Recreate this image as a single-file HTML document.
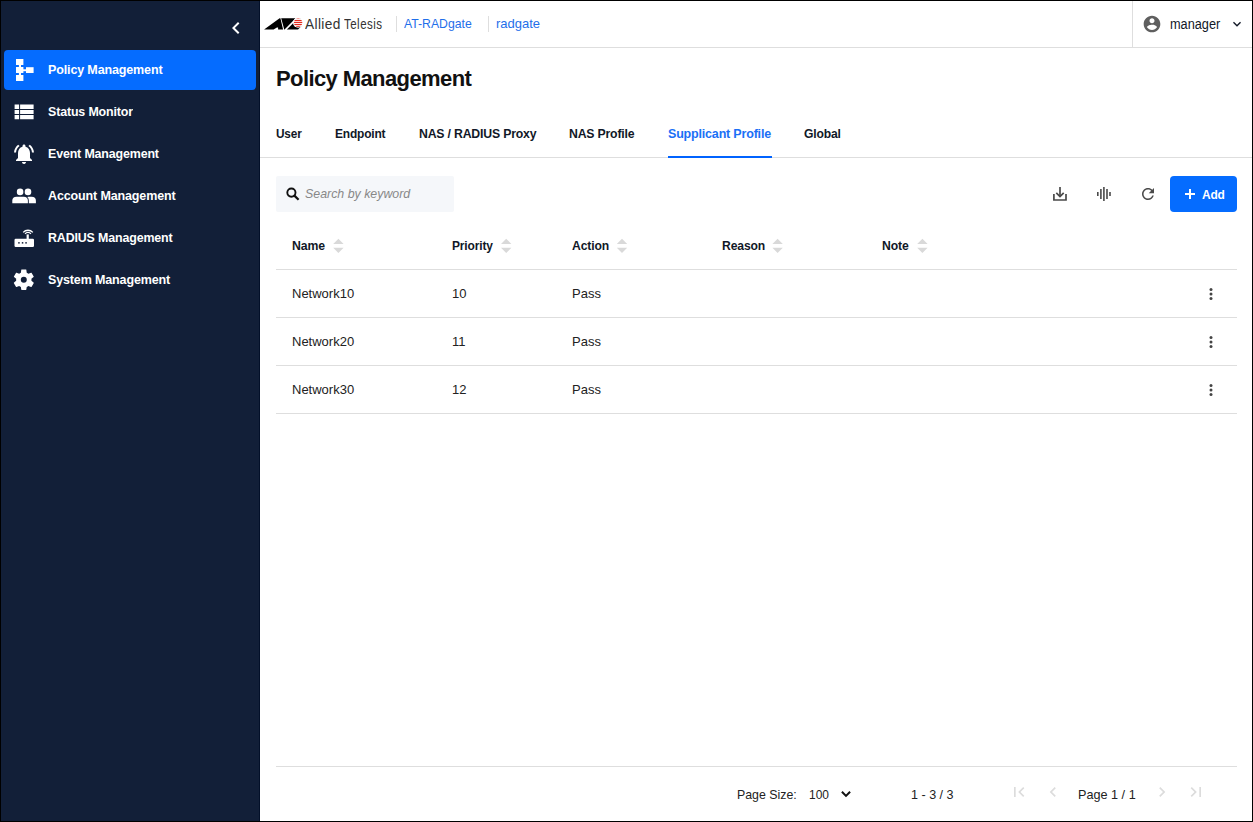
<!DOCTYPE html>
<html>
<head>
<meta charset="utf-8">
<style>
*{box-sizing:border-box;margin:0;padding:0}
html,body{width:1253px;height:822px;overflow:hidden;background:#000}
body{position:relative;font-family:"Liberation Sans",sans-serif}
.a{position:absolute;white-space:nowrap}
svg.a{overflow:visible}
#side{position:absolute;left:1px;top:1px;width:258px;height:820px;background:#121f38}
#sidel{position:absolute;left:259px;top:1px;width:1px;height:820px;background:#031029}
#main{position:absolute;left:260px;top:1px;width:992px;height:820px;background:#fff}
.nav{position:absolute;left:4px;width:252px;height:40px;border-radius:4px}
.nav.active{background:#056cff}
.nt{position:absolute;left:48px;transform:scaleX(.955);transform-origin:0 0;font-size:13px;font-weight:bold;color:#fff;letter-spacing:-0.15px;line-height:16px;white-space:nowrap}
.hl{position:absolute;background:#dedede}
.tab{position:absolute;top:126px;font-size:13px;font-weight:bold;color:#111827;letter-spacing:-0.2px;line-height:16px;white-space:nowrap}
.th{position:absolute;top:238px;font-size:13px;font-weight:bold;color:#111827;letter-spacing:-0.15px;line-height:16px;white-space:nowrap}
.td{position:absolute;font-size:13px;color:#222;line-height:16px;white-space:nowrap}
.pg{position:absolute;top:787px;font-size:13px;color:#222;line-height:16px;white-space:nowrap}
</style>
</head>
<body>
<div id="side"></div>
<div id="sidel"></div>
<div id="main"></div>

<!-- sidebar collapse chevron -->
<svg class="a" style="left:224px;top:16px" width="24" height="24" viewBox="0 0 24 24"><path fill="#fff" d="M15.41 7.41L14 6l-6 6 6 6 1.41-1.41L10.83 12z"/></svg>

<!-- nav items -->
<div class="nav active" style="top:50px"></div>
<svg class="a" style="left:12px;top:58px" width="24" height="24" viewBox="0 0 24 24" fill="#fff">
  <rect x="4" y="1" width="7.4" height="6"/>
  <rect x="4" y="9" width="7.4" height="6"/>
  <rect x="4" y="17" width="7.4" height="6"/>
  <rect x="6.9" y="6" width="2.1" height="12"/>
  <rect x="11" y="11.3" width="3" height="1.9"/>
  <rect x="14" y="9.2" width="7.6" height="5.8"/>
</svg>
<div class="nt" style="top:62px;transform:scaleX(.963)">Policy Management</div>

<svg class="a" style="left:12px;top:100px" width="24" height="24" viewBox="0 0 24 24" fill="#fff"><path d="M2.6 4.6H7.1V9.1H2.6ZM2.6 9.9H7.1V14.1H2.6ZM2.6 15H7.1V19.2H2.6ZM8.1 4.6H21.6V9.1H8.1ZM8.1 9.9H21.6V14.1H8.1ZM8.1 15H21.6V19.2H8.1Z"/></svg>
<div class="nt" style="top:104px">Status Monitor</div>

<svg class="a" style="left:12px;top:142px" width="24" height="24" viewBox="0 0 24 24" fill="#fff"><path d="M7.58 4.08L6.15 2.65C3.75 4.48 2.17 7.3 2.03 10.5h2c.15-2.65 1.51-4.97 3.55-6.42zm12.39 6.42h2c-.15-3.2-1.73-6.02-4.12-7.85l-1.42 1.43c2.02 1.45 3.39 3.77 3.54 6.42zM18 11c0-3.07-1.64-5.64-4.5-6.32V4c0-.83-.67-1.5-1.5-1.5s-1.5.67-1.5 1.5v.68C7.63 5.36 6 7.92 6 11v5l-2 2v1h16v-1l-2-2v-5zm-6 11c.14 0 .27-.01.4-.04.65-.14 1.18-.58 1.44-1.18.1-.24.16-.5.16-.78h-4c.01 1.1.9 2 2 2z"/></svg>
<div class="nt" style="top:146px">Event Management</div>

<svg class="a" style="left:0px;top:0px" width="60" height="300" viewBox="0 0 60 300" fill="#fff">
  <circle cx="20.1" cy="191.9" r="3.3"/>
  <circle cx="28" cy="191.9" r="3.3"/>
  <path d="M12.3 203.3V200.8Q12.3 196.8 16.6 196.8H23.6Q27.9 196.8 27.9 200.8V203.3Z"/>
  <path d="M28.8 203.3V200.6Q28.8 198.3 27.3 196.9L28.6 196.8H31.6Q35.9 196.8 35.9 200.8V203.3Z"/>
</svg>
<div class="nt" style="top:188px;transform:scaleX(.963)">Account Management</div>

<svg class="a" style="left:0px;top:0px" width="60" height="300" viewBox="0 0 60 300" fill="#fff">
  <rect x="14.5" y="238.7" width="19.5" height="8.3" rx="1.2"/>
  <rect x="26.6" y="234.4" width="2.2" height="5" />
  <path d="M23.2 232.4a6.4 6.4 0 0 1 9.6 0" fill="none" stroke="#fff" stroke-width="1.3"/>
  <path d="M25.1 233.9a3.6 3.6 0 0 1 5.8 0" fill="none" stroke="#fff" stroke-width="1.3"/>
  <rect x="18.2" y="242.1" width="1.5" height="1.5" fill="#121f38"/>
  <rect x="21.8" y="242.1" width="1.5" height="1.5" fill="#121f38"/>
  <rect x="25.3" y="242.1" width="1.5" height="1.5" fill="#121f38"/>
</svg>
<div class="nt" style="top:230px">RADIUS Management</div>

<svg class="a" style="left:11.2px;top:267px" width="25.6" height="25.6" viewBox="0 0 24 24" fill="#fff"><path d="M19.14,12.94c0.04-0.3,0.06-0.61,0.06-0.94c0-0.32-0.02-0.64-0.07-0.94l2.03-1.58c0.18-0.14,0.23-0.41,0.12-0.61 l-1.92-3.32c-0.12-0.22-0.37-0.29-0.59-0.22l-2.39,0.96c-0.5-0.38-1.03-0.7-1.62-0.94L14.4,2.81c-0.04-0.24-0.24-0.41-0.48-0.41 h-3.84c-0.24,0-0.43,0.17-0.47,0.41L9.25,5.350C8.66,5.59,8.12,5.92,7.63,6.29L5.24,5.33c-0.22-0.08-0.47,0-0.59,0.22L2.74,8.87 C2.62,9.08,2.66,9.34,2.86,9.48l2.03,1.58C4.840,11.36,4.8,11.69,4.8,12s0.02,0.64,0.07,0.94l-2.03,1.58 c-0.18,0.14-0.23,0.41-0.12,0.61l1.92,3.32c0.12,0.22,0.37,0.29,0.59,0.22l2.39-0.96c0.5,0.38,1.03,0.7,1.62,0.94l0.36,2.54 c0.05,0.24,0.24,0.41,0.48,0.41h3.84c0.24,0,0.44-0.17,0.47-0.41l0.36-2.54c0.59-0.24,1.13-0.56,1.62-0.94l2.39,0.96 c0.22,0.08,0.47,0,0.59-0.22l1.92-3.32c0.12-0.22,0.07-0.47-0.12-0.61L19.14,12.94z M12,14.8a2.8,2.8 0 1 1 0-5.6a2.8,2.8 0 1 1 0 5.6z"/></svg>
<div class="nt" style="top:272px;transform:scaleX(.963)">System Management</div>

<!-- header -->
<div class="hl" style="left:260px;top:47px;width:992px;height:1px"></div>
<div class="hl" style="left:1132px;top:1px;width:1px;height:46px"></div>

<!-- logo -->
<svg class="a" style="left:0;top:0" width="400" height="50" viewBox="0 0 400 50">
  <defs><clipPath id="globe"><circle cx="298.1" cy="22.7" r="4.2"/></clipPath></defs>
  <path fill="#000" d="M264.1 29.6L279.6 18.3H280.4L283.1 29.6H278.1V27.4H276.9L273.6 29.6Z"/>
  <path fill="#000" d="M281.2 18.3H295.6L284.3 29.7Z"/>
  <path fill="#000" d="M286.9 29.6L298.1 18.3H300.5L301.5 26L298 29.6Z"/>
  <circle cx="298.1" cy="22.7" r="5.1" fill="#fff"/>
  <g clip-path="url(#globe)" fill="#e52b1e">
    <rect x="293" y="18" width="11" height="1"/>
    <rect x="293" y="19.9" width="11" height="1.2"/>
    <rect x="293" y="21.9" width="11" height="1.2"/>
    <rect x="293" y="24" width="11" height="1.2"/>
    <rect x="293" y="26.1" width="11" height="1.1"/>
  </g>
</svg>
<div class="a" style="left:305px;top:15px;font-size:15px;letter-spacing:0.4px;color:#333;line-height:18px;transform:scaleX(.915);transform-origin:0 0">Allied</div><div class="a" style="left:344px;top:15px;font-size:15px;letter-spacing:0.6px;color:#333;line-height:18px;transform:scaleX(.77);transform-origin:0 0">Telesis</div>
<div class="hl" style="left:396px;top:16px;width:1px;height:16px"></div>
<div class="a" style="left:404px;top:16px;font-size:13px;color:#1f6fea;line-height:16px;transform:scaleX(.94);transform-origin:0 0">AT-RADgate</div>
<div class="hl" style="left:488px;top:16px;width:1px;height:16px"></div>
<div class="a" style="left:496px;top:16px;font-size:13px;color:#1f6fea;line-height:16px">radgate</div>

<!-- user -->
<svg class="a" style="left:1141.5px;top:14.4px" width="20" height="20" viewBox="0 0 24 24"><path fill="#5f5f5f" d="M12 2C6.48 2 2 6.48 2 12s4.48 10 10 10 10-4.48 10-10S17.52 2 12 2zm0 3c1.66 0 3 1.34 3 3s-1.34 3-3 3-3-1.34-3-3 1.34-3 3-3zm0 14.2c-2.5 0-4.71-1.28-6-3.22.03-1.99 4-3.08 6-3.08 1.99 0 5.97 1.09 6 3.08-1.29 1.94-3.5 3.22-6 3.22z"/></svg>
<div class="a" style="left:1170px;top:16px;font-size:14px;color:#111827;line-height:16px;transform:scaleX(.91);transform-origin:0 0">manager</div>
<svg class="a" style="left:1229px;top:16px" width="16" height="16" viewBox="0 0 24 24"><path fill="#111827" d="M16.59 8.59L12 13.17 7.41 8.59 6 10l6 6 6-6z"/></svg>

<!-- title -->
<div class="a" style="left:276px;top:67px;font-size:22px;font-weight:bold;color:#111;letter-spacing:-0.6px;line-height:24px">Policy Management</div>

<!-- tabs -->
<div class="tab" style="left:276px;transform:scaleX(0.91);transform-origin:0 0">User</div>
<div class="tab" style="left:335px;transform:scaleX(0.92);transform-origin:0 0">Endpoint</div>
<div class="tab" style="left:419px;transform:scaleX(0.944);transform-origin:0 0">NAS / RADIUS Proxy</div>
<div class="tab" style="left:569px;transform:scaleX(0.943);transform-origin:0 0">NAS Profile</div>
<div class="tab" style="left:668px;color:#1a70f6;transform:scaleX(.963);transform-origin:0 0">Supplicant Profile</div>
<div class="tab" style="left:804px;transform:scaleX(0.933);transform-origin:0 0">Global</div>
<div class="hl" style="left:260px;top:157px;width:992px;height:1px"></div>
<div class="a" style="left:668px;top:156px;width:104px;height:2px;background:#0063ff"></div>

<!-- search -->
<div class="a" style="left:276px;top:176px;width:178px;height:36px;background:#f5f7fa;border-radius:2px"></div>
<svg class="a" style="left:0;top:0" width="400" height="220" viewBox="0 0 400 220" fill="none" stroke="#111"><circle cx="291.4" cy="192.6" r="4.1" stroke-width="1.9"/><path d="M294.4 195.6L298.6 199.8" stroke-width="2.2"/></svg>
<div class="a" style="left:305px;top:186px;font-size:13px;font-style:italic;color:#888;line-height:16px;transform:scaleX(.952);transform-origin:0 0">Search by keyword</div>

<!-- toolbar -->
<svg class="a" style="left:0;top:0" width="1253" height="260" viewBox="0 0 1253 260" fill="none" stroke="#4a4a4a" stroke-width="1.7">
  <path d="M1060 186.9V196"/>
  <path d="M1056.3 192.8L1060 196.5L1063.7 192.8"/>
  <path d="M1053.9 194V200H1066V194"/>
  <path d="M1097.8 192V196M1100.9 189V199M1103.9 187V201M1107 189V199M1110 192V196" stroke-width="1.6"/>
</svg>
<svg class="a" style="left:1139px;top:185px" width="18" height="18" viewBox="0 0 24 24"><path fill="#4a4a4a" d="M17.65 6.35C16.2 4.9 14.21 4 12 4c-4.42 0-7.99 3.58-7.99 8s3.57 8 7.99 8c3.73 0 6.84-2.55 7.73-6h-2.08c-.82 2.33-3.04 4-5.65 4-3.31 0-6-2.69-6-6s2.69-6 6-6c1.66 0 3.140.69 4.22 1.78L13 11h7V4l-2.35 2.35z"/></svg>
<div class="a" style="left:1170px;top:176px;width:67px;height:36px;background:#056cff;border-radius:4px"></div>
<div class="a" style="left:1185px;top:193px;width:10px;height:2px;background:#fff"></div><div class="a" style="left:1189px;top:189px;width:2px;height:10px;background:#fff"></div>
<div class="a" style="left:1202px;top:187px;font-size:13px;font-weight:bold;color:#fff;line-height:16px;letter-spacing:-0.2px;transform:scaleX(.92);transform-origin:0 0">Add</div>

<!-- table header -->
<div class="th" style="left:292px;transform:scaleX(0.943);transform-origin:0 0">Name</div>
<div class="th" style="left:452px;transform:scaleX(0.92);transform-origin:0 0">Priority</div>
<div class="th" style="left:572px;transform:scaleX(0.935);transform-origin:0 0">Action</div>
<div class="th" style="left:722px;transform:scaleX(0.935);transform-origin:0 0">Reason</div>
<div class="th" style="left:882px;transform:scaleX(0.938);transform-origin:0 0">Note</div>
<svg class="a" style="left:0;top:0" width="1000" height="260" viewBox="0 0 1000 260" fill="#d9d9d9">
  <path d="M333.2 243.9L338.4 238.8L343.6 243.9ZM333.2 247.8L338.4 253L343.6 247.8Z"/>
  <path d="M501 243.9L506.2 238.8L511.4 243.9ZM501 247.8L506.2 253L511.4 247.8Z"/>
  <path d="M616.8 243.9L622 238.8L627.2 243.9ZM616.8 247.8L622 253L627.2 247.8Z"/>
  <path d="M772.4 243.9L777.6 238.8L782.8 243.9ZM772.4 247.8L777.6 253L782.8 247.8Z"/>
  <path d="M917.2 243.9L922.4 238.8L927.6 243.9ZM917.2 247.8L922.4 253L927.6 247.8Z"/>
</svg>
<div class="hl" style="left:276px;top:269px;width:961px;height:1px"></div>

<!-- rows -->
<div class="td" style="left:292px;top:286px">Network10</div>
<div class="td" style="left:452px;top:286px">10</div>
<div class="td" style="left:572px;top:286px">Pass</div>
<div class="hl" style="left:276px;top:317px;width:961px;height:1px"></div>
<div class="td" style="left:292px;top:334px">Network20</div>
<div class="td" style="left:452px;top:334px">11</div>
<div class="td" style="left:572px;top:334px">Pass</div>
<div class="hl" style="left:276px;top:365px;width:961px;height:1px"></div>
<div class="td" style="left:292px;top:382px">Network30</div>
<div class="td" style="left:452px;top:382px">12</div>
<div class="td" style="left:572px;top:382px">Pass</div>
<div class="hl" style="left:276px;top:413px;width:961px;height:1px"></div>
<svg class="a" style="left:0;top:0" width="1253" height="420" viewBox="0 0 1253 420" fill="#444">
  <circle cx="1211" cy="289.4" r="1.5"/><circle cx="1211" cy="294" r="1.5"/><circle cx="1211" cy="298.6" r="1.5"/>
  <circle cx="1211" cy="337.4" r="1.5"/><circle cx="1211" cy="342" r="1.5"/><circle cx="1211" cy="346.6" r="1.5"/>
  <circle cx="1211" cy="385.4" r="1.5"/><circle cx="1211" cy="390" r="1.5"/><circle cx="1211" cy="394.6" r="1.5"/>
</svg>

<!-- footer -->
<div class="hl" style="left:276px;top:766px;width:961px;height:1px"></div>
<div class="pg" style="left:736.5px;transform:scaleX(0.95);transform-origin:0 0">Page Size:</div>
<div class="pg" style="left:808.7px;transform:scaleX(0.92);transform-origin:0 0">100</div>
<svg class="a" style="left:0;top:0" width="900" height="822" viewBox="0 0 900 822" fill="none" stroke="#111" stroke-width="2"><path d="M841.9 791.8L846 795.9L850.1 791.8"/></svg>
<div class="pg" style="left:910.8px;transform:scaleX(0.966);transform-origin:0 0">1 - 3 / 3</div>
<svg class="a" style="left:1009px;top:782px" width="20" height="20" viewBox="0 0 24 24"><path fill="#dcdcdc" d="M18.41 16.59L13.82 12l4.59-4.59L17 6l-6 6 6 6zM6 6h2v12H6z"/></svg>
<svg class="a" style="left:1043px;top:782px" width="20" height="20" viewBox="0 0 24 24"><path fill="#dcdcdc" d="M15.41 7.41L14 6l-6 6 6 6 1.41-1.41L10.83 12z"/></svg>
<div class="pg" style="left:1078.3px;transform:scaleX(0.973);transform-origin:0 0">Page 1 / 1</div>
<svg class="a" style="left:1152px;top:782px" width="20" height="20" viewBox="0 0 24 24"><path fill="#dcdcdc" d="M10 6L8.59 7.41 13.17 12l-4.58 4.59L10 18l6-6z"/></svg>
<svg class="a" style="left:1186px;top:782px" width="20" height="20" viewBox="0 0 24 24"><path fill="#dcdcdc" d="M5.59 7.41L10.18 12l-4.59 4.59L7 18l6-6-6-6zM16 6h2v12h-2z"/></svg>
</body>
</html>
